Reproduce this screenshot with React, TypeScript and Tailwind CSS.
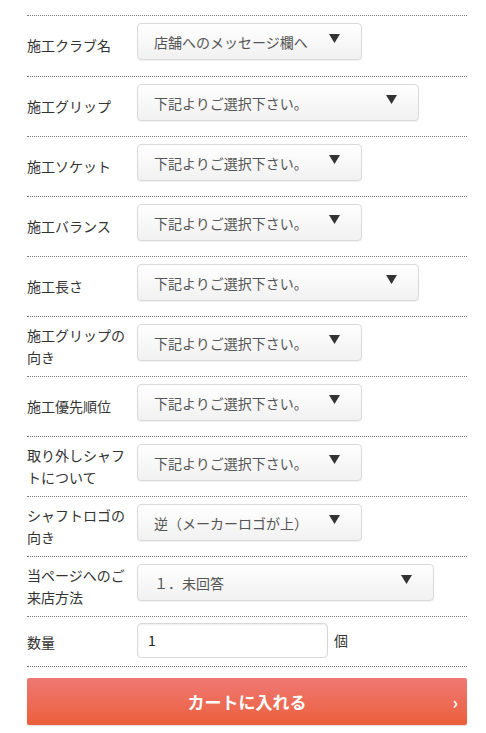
import React from "react";

type Row = { label: string; value: string; width: string };

const rows: Row[] = [
  { label: "施工クラブ名", value: "店舗へのメッセージ欄へ", width: "w-[225px]" },
  { label: "施工グリップ", value: "下記よりご選択下さい。", width: "w-[282px]" },
  { label: "施工ソケット", value: "下記よりご選択下さい。", width: "w-[225px]" },
  { label: "施工バランス", value: "下記よりご選択下さい。", width: "w-[225px]" },
  { label: "施工長さ", value: "下記よりご選択下さい。", width: "w-[282px]" },
  { label: "施工グリップの向き", value: "下記よりご選択下さい。", width: "w-[225px]" },
  { label: "施工優先順位", value: "下記よりご選択下さい。", width: "w-[225px]" },
  { label: "取り外しシャフトについて", value: "下記よりご選択下さい。", width: "w-[225px]" },
  { label: "シャフトロゴの向き", value: "逆（メーカーロゴが上）", width: "w-[225px]" },
  { label: "当ページへのご来店方法", value: "１．未回答", width: "w-[297px]" },
];

const Arrow = () => (
  <svg width="11" height="9" viewBox="0 0 11 9" className="absolute right-[21px] top-[10px]">
    <path d="M0 0 H11 L5.5 9 Z" fill="#333" />
  </svg>
);

const SelectBox = ({ value, width }: { value: string; width: string }) => (
  <div
    className={`relative ${width} h-[37px] rounded-[4px] border border-[#d9d9d9] bg-gradient-to-b from-white to-[#f1f1f1] shadow-[0_1px_1px_rgba(0,0,0,0.06)] pl-[16px] flex items-center text-[14px] text-[#555]`}
  >
    <span className="leading-none">{value}</span>
    <Arrow />
  </div>
);

export default function App() {
  return (
    <div
      className="w-[486px] bg-white pt-[15px] pl-[27px] pr-[19px] pb-[10px]"
      style={{ fontFamily: '"Noto Sans CJK JP", "Noto Sans", sans-serif' }}
    >
      {rows.map((r, i) => (
        <div key={r.label} className="flex border-t border-dotted border-[#777]">
          <div className="w-[110px] pr-[6px] flex items-center text-[14px] leading-[22px] text-[#333] pb-[2px]">
            {r.label}
          </div>
          <div className={i === 0 ? "pt-[7px] pb-[16px]" : "pt-[7px] pb-[15px]"}>
            <SelectBox value={r.value} width={r.width} />
          </div>
        </div>
      ))}

      {/* 数量 */}
      <div className="flex border-t border-dotted border-[#777]">
        <div className="w-[110px] flex items-center text-[14px] leading-[22px] text-[#333]">数量</div>
        <div className="pt-[6px] pb-[8px] flex items-center gap-[6px]">
          <div className="w-[191px] h-[35px] rounded-[4px] border border-[#d9d9d9] bg-white shadow-[inset_0_1px_2px_rgba(0,0,0,0.08)] pl-[10px] flex items-center text-[14px] text-[#222]">
            1
          </div>
          <span className="text-[14px] text-[#333]">個</span>
        </div>
      </div>

      <div className="border-t border-dotted border-[#777] pt-[11px]">
        <button className="relative w-full h-[47px] rounded-[2px] bg-gradient-to-b from-[#ef7873] to-[#eb5f38] shadow-[0_1px_1px_rgba(0,0,0,0.12)] flex items-center justify-center text-white font-bold text-[17px]">
          カートに入れる
          <span className="absolute right-[9px] top-[11px] text-[17px] font-bold">›</span>
        </button>
      </div>
    </div>
  );
}
